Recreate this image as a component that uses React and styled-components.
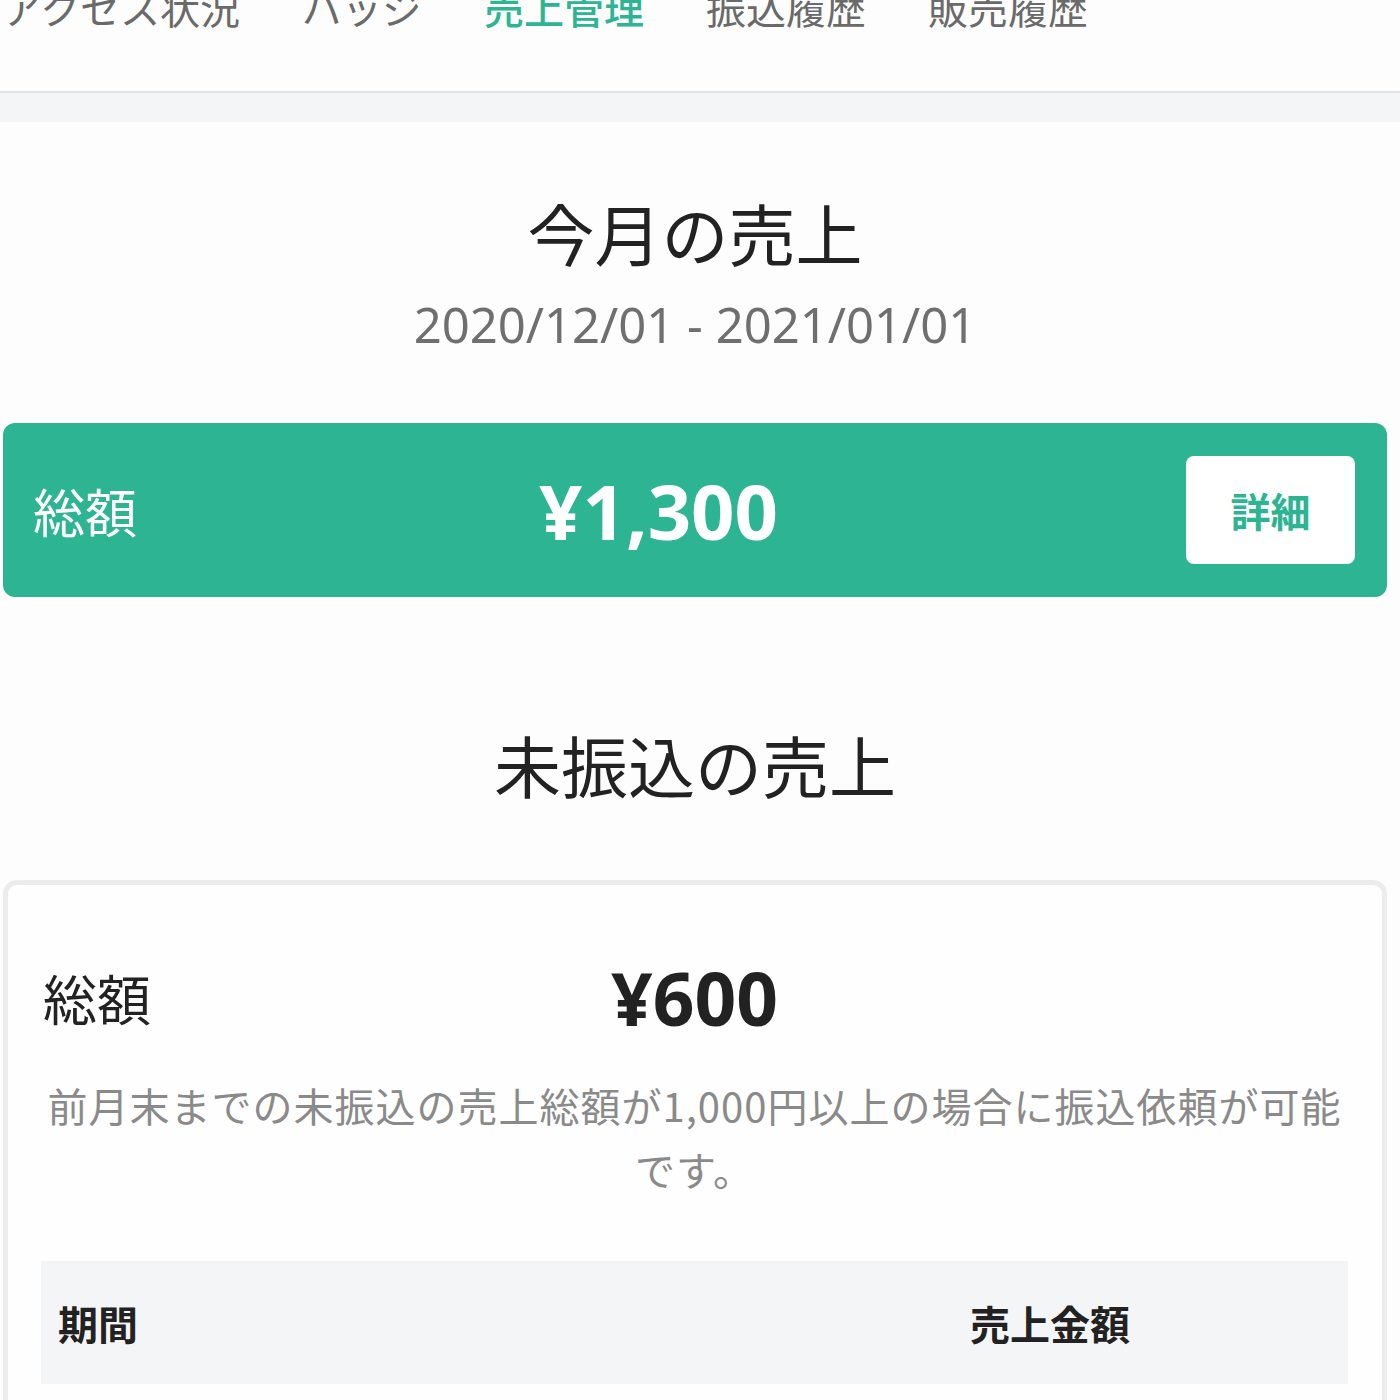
import React from "react";
import styled, { createGlobalStyle } from "styled-components";

const GREEN = "#2db593";

const Global = createGlobalStyle`
  html, body { margin: 0; padding: 0; background: #fdfdfd; }
  body { font-family: "Noto Sans CJK JP", "Noto Sans", sans-serif; color: #222; }
  * { box-sizing: border-box; }
`;

const Page = styled.div`
  width: 1400px;
  height: 1400px;
  overflow: hidden;
  background: #fdfdfd;
`;

const Nav = styled.nav`
  height: 93px;
  background: #fdfdfd;
  border-bottom: 2px solid #e2e3e4;
  overflow: hidden;
`;

const TabRow = styled.div`
  display: flex;
  gap: 62px;
  margin-top: -13px;
  margin-left: 2px;
`;

const Tab = styled.div`
  font-size: 40px;
  line-height: 40px;
  white-space: nowrap;
  color: ${(p) => (p.$active ? GREEN : "#6a6a6a")};
  font-weight: ${(p) => (p.$active ? 500 : 400)};
`;

const Band = styled.div`
  height: 29px;
  background: #f4f5f6;
`;

const Content = styled.main`
  display: flex;
  flex-direction: column;
  align-items: center;
  padding: 63px 13px 0 3px;
`;

const Title = styled.h2`
  margin: 0;
  font-size: 67px;
  line-height: 94px;
  font-weight: 400;
  color: #222;
`;

const DateRange = styled.div`
  margin-top: 12px;
  font-family: "Noto Sans", sans-serif;
  font-size: 49px;
  line-height: 67px;
  color: #6f6f6f;
`;

const Banner = styled.section`
  align-self: stretch;
  margin-top: 65px;
  height: 174px;
  background: ${GREEN};
  border-radius: 12px;
  display: flex;
  align-items: center;
  padding: 0 32px 0 30px;
`;

const AmountLabel = styled.div`
  flex: 0 0 ${(p) => p.$w}px;
  font-size: ${(p) => p.$size}px;
  color: ${(p) => p.$color};
  font-weight: 400;
`;

const AmountValue = styled.div`
  flex: 0 0 ${(p) => p.$w}px;
  text-align: right;
  font-family: "Open Sans", "Noto Sans", sans-serif;
  font-weight: 700;
  font-size: ${(p) => p.$size}px;
  color: ${(p) => p.$color};
`;

const DetailButton = styled.button`
  margin-left: auto;
  width: 169px;
  height: 108px;
  border: none;
  border-radius: 8px;
  background: #fff;
  color: ${GREEN};
  font-family: "Noto Sans CJK JP", sans-serif;
  font-size: 40px;
  font-weight: 700;
`;

const SectionTitle = styled(Title)`
  margin-top: 120px;
`;

const Card = styled.section`
  align-self: stretch;
  margin-top: 69px;
  border: 5px solid #ececec;
  border-radius: 14px;
  background: #fefefe;
  padding: 62px 34px 80px 33px;
`;

const AmountRow = styled.div`
  display: flex;
  align-items: center;
  height: 100px;
  padding-left: 2px;
`;

const Note = styled.p`
  margin: 26px 0 0;
  text-align: center;
  font-size: 40px;
  letter-spacing: 1px;
  line-height: 64px;
  color: #8a8a8a;
`;

const TableHead = styled.div`
  margin-top: 60px;
  height: 123px;
  background: #f4f5f6;
  display: grid;
  grid-template-columns: 912px 1fr;
  align-items: center;
  padding-left: 17px;
`;

const HeadCell = styled.div`
  font-size: 40px;
  font-weight: 700;
  color: #222;
`;

export default function App() {
  return (
    <Page>
      <Global />
      <Nav>
        <TabRow>
          <Tab>アクセス状況</Tab>
          <Tab>バッジ</Tab>
          <Tab $active>売上管理</Tab>
          <Tab>振込履歴</Tab>
          <Tab>販売履歴</Tab>
        </TabRow>
      </Nav>
      <Band />
      <Content>
        <Title>今月の売上</Title>
        <DateRange>2020/12/01 - 2021/01/01</DateRange>
        <Banner>
          <AmountLabel $w={200} $size={52} $color="#fff">総額</AmountLabel>
          <AmountValue $w={545} $size={76} $color="#fff">¥1,300</AmountValue>
          <DetailButton>詳細</DetailButton>
        </Banner>
        <SectionTitle>未振込の売上</SectionTitle>
        <Card>
          <AmountRow>
            <AmountLabel $w={200} $size={54} $color="#222">総額</AmountLabel>
            <AmountValue $w={535} $size={73} $color="#222">¥600</AmountValue>
          </AmountRow>
          <Note>前月末までの未振込の売上総額が1,000円以上の場合に振込依頼が可能です。</Note>
          <TableHead>
            <HeadCell>期間</HeadCell>
            <HeadCell>売上金額</HeadCell>
          </TableHead>
        </Card>
      </Content>
    </Page>
  );
}
